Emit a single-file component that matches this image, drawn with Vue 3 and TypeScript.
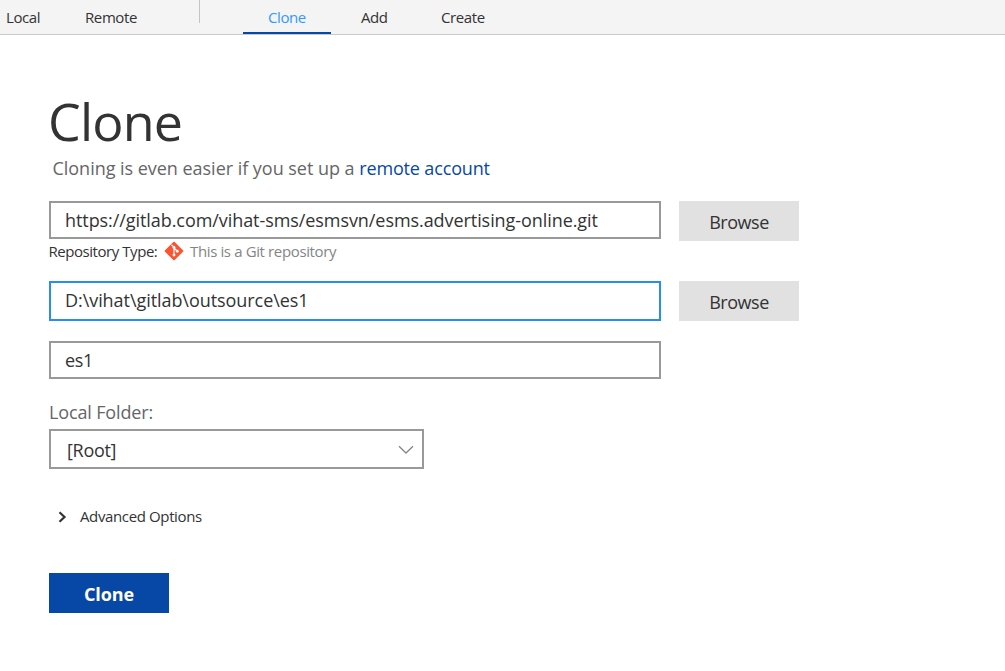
<script setup lang="ts">
import { ref } from 'vue'

const url = ref('https://gitlab.com/vihat-sms/esmsvn/esms.advertising-online.git')
const path = ref('D:\\vihat\\gitlab\\outsource\\es1')
const name = ref('es1')
</script>

<template>
  <main class="page">
    <nav class="tabs">
      <a class="tab local"><span>Local</span></a>
      <a class="tab remote"><span>Remote</span></a>
      <i class="divider"></i>
      <a class="tab clone active"><span>Clone</span></a>
      <a class="tab add"><span>Add</span></a>
      <a class="tab create"><span>Create</span></a>
    </nav>
    <section class="content">
      <h1><span>Clone</span></h1>
      <p class="hint"><span class="hint-text">Cloning is even easier if you set up a </span><a class="link">remote account</a></p>
      <div class="row source">
        <div class="field"><span class="url">{{ url }}</span></div>
        <button class="browse"><span>Browse</span></button>
      </div>
      <div class="type">
        <span class="type-label">Repository Type:</span>
        <svg class="git" width="20" height="20" viewBox="0 0 20 20">
          <rect x="3.15" y="3.15" width="13.7" height="13.7" rx="1" fill="#fb5430" transform="rotate(45 10 10)" />
          <path d="M7.5 3.8 10 6.2V14M10 7l3.3 3.2" fill="none" stroke="#fff" stroke-width="1.2" />
          <circle cx="10" cy="6.4" r="1.45" fill="#fff" />
          <circle cx="10" cy="14" r="1.45" fill="#fff" />
          <circle cx="13.3" cy="10.2" r="1.45" fill="#fff" />
        </svg>
        <span class="type-value">This is a Git repository</span>
      </div>
      <div class="row dest">
        <div class="field focused"><span class="path">{{ path }}</span></div>
        <button class="browse"><span>Browse</span></button>
      </div>
      <div class="field name"><span>{{ name }}</span></div>
      <label class="folder-label"><span>Local Folder:</span></label>
      <div class="select">
        <span>[Root]</span>
        <svg width="16" height="10" viewBox="0 0 16 10"><path d="M1 1.2 8 8 15 1.2" fill="none" stroke="#858585" stroke-width="1.3" /></svg>
      </div>
      <div class="advanced">
        <svg width="9" height="12" viewBox="0 0 9 12"><path d="M1.5 1.3 6.5 6 1.5 10.7" fill="none" stroke="#333" stroke-width="2.2" /></svg>
        <span>Advanced Options</span>
      </div>
      <button class="submit"><span>Clone</span></button>
    </section>
  </main>
</template>

<style>
body { background: #fff; }
</style>

<style scoped>
.page {
  width: 1005px;
  height: 671px;
  overflow: hidden;
  background: #fff;
  color: #333;
  font-family: "Open Sans", "Noto Sans", sans-serif;
  font-size: 18px;
  letter-spacing: -0.3px;
}
.page * { box-sizing: border-box; }
span, a { white-space: pre; }
.tabs {
  display: flex;
  height: 35px;
  background: #f4f4f4;
  border-bottom: 1px solid #c9c9c9;
  font-size: 15px;
  letter-spacing: -0.4px;
  line-height: 34px;
}
.tab { height: 34px; }
.local { width: 79px; padding-left: 6px; }
.remote { width: 120px; padding-left: 6px; }
.divider { width: 1px; height: 23px; background: #c4c4c4; margin-right: 43px; }
.clone { width: 88px; padding-left: 25px; }
.active { color: #3399ff; border-bottom: 2px solid #0747a6; }
.add { width: 80px; padding-left: 30px; }
.create { padding-left: 30px; }
.content { padding: 51px 0 0 49px; }
h1 { margin: 0; height: 70px; line-height: 70px; font-size: 52px; font-weight: 400; letter-spacing: -0.8px; margin-left: -1px; }
.hint { margin: 0; height: 24px; line-height: 24px; padding-left: 3.5px; color: #666; }
.hint-text { letter-spacing: -0.03px; }
.link { color: #0747a6; letter-spacing: -0.15px; }
.url { letter-spacing: -0.07px; }
.path { letter-spacing: -0.06px; }
.row { display: flex; gap: 18px; height: 40px; }
.source { margin-top: 21px; }
.field {
  width: 612px;
  height: 38px;
  border: 2px solid #999;
  padding-left: 14px;
  line-height: 34px;
}
.field.focused { height: 40px; border-color: #278df5; }
.browse, .submit {
  width: 120px;
  height: 40px;
  border: 0;
  padding: 2px 0 0;
  background: #e1e1e1;
  color: #333;
  font: inherit;
  letter-spacing: -0.45px;
}
.type { display: flex; height: 20px; line-height: 20px; font-size: 15px; }
.type-label { width: 115px; margin-left: -0.5px; margin-right: 0.5px; letter-spacing: -0.45px; }
.git { margin-right: 6px; }
.type-value { color: #858585; letter-spacing: -0.37px; }
.dest { margin-top: 20px; }
.name { margin-top: 20px; }
.folder-label { display: block; height: 24px; line-height: 24px; margin-top: 21px; color: #666; letter-spacing: -0.15px; }
.select {
  display: flex;
  align-items: center;
  justify-content: space-between;
  width: 375px;
  height: 40px;
  margin-top: 5px;
  padding: 2px 8px 0 16px;
  border: 2px solid #999;
}
.select svg { margin-bottom: 1px; }
.advanced { display: flex; align-items: center; height: 24px; margin-top: 36px; padding-left: 9px; font-size: 15px; letter-spacing: -0.37px; }
.advanced span { margin: 0 0 2px 13px; }
.submit { display: block; margin-top: 44px; background: #0747a6; color: #fff; font-weight: 700; letter-spacing: -0.1px; }
</style>
